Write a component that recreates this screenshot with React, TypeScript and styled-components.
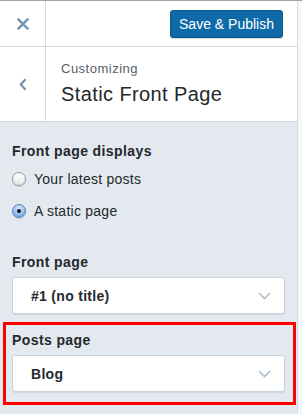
import styled, { createGlobalStyle } from "styled-components";

const GlobalStyle = createGlobalStyle`
    html, body {
        margin: 0;
        padding: 0;
        background: #f7f7f7;
    }
    body {
        font-family: "Liberation Sans", Arial, sans-serif;
        color: #23282d;
    }
`;

const Page = styled.div`
    display: flex;
    width: 302px;
    height: 414px;
    border-top: 1px solid #a3a3a3;
    box-sizing: border-box;
    overflow: hidden;
`;

const Sidebar = styled.div`
    width: 298px;
    background: #e3e9ef;
    border-right: 1px solid #d0dae3;
    box-sizing: border-box;
    display: flex;
    flex-direction: column;
`;

const HeaderRow = styled.div<{ $height: number }>`
    display: flex;
    align-items: stretch;
    height: ${(p) => p.$height}px;
    background: #fff;
    border-bottom: 1px solid #d0dae3;
    box-sizing: border-box;
`;

const IconCell = styled.button`
    width: 46px;
    flex: none;
    border: none;
    border-right: 1px solid #d0dae3;
    background: #fff;
    padding: 0;
    display: flex;
    align-items: center;
    justify-content: center;
    cursor: pointer;
`;

const Actions = styled.div`
    flex: 1;
    display: flex;
    justify-content: flex-end;
    align-items: center;
    padding-right: 14px;
`;

const PublishButton = styled.button`
    width: 113px;
    height: 28px;
    background: #0f6aa8;
    border: 1px solid #0a5a8f;
    border-radius: 3px;
    color: #fff;
    font-family: "Liberation Sans", Arial, sans-serif;
    font-size: 14px;
    padding: 0;
    box-shadow: 0 1px 0 rgba(0, 0, 0, 0.15);
    cursor: pointer;
`;

const TitleBlock = styled.div`
    flex: 1;
    display: flex;
    flex-direction: column;
    justify-content: center;
    padding-left: 15px;
    padding-bottom: 1px;
`;

const Eyebrow = styled.span`
    font-size: 13px;
    letter-spacing: 0.5px;
    color: #555d66;
    line-height: 16px;
`;

const Title = styled.h1`
    margin: 5px 0 0;
    font-size: 20px;
    font-weight: 400;
    letter-spacing: 0.4px;
    line-height: 24px;
    color: #23282d;
`;

const Content = styled.div`
    display: flex;
    flex-direction: column;
    padding: 20px 12px 0;
`;

const SectionLabel = styled.div`
    font-size: 14px;
    font-weight: 700;
    letter-spacing: 0.4px;
    color: #23282d;
    line-height: 18px;
`;

const RadioList = styled.div`
    display: flex;
    flex-direction: column;
    gap: 14px;
    margin-top: 10px;
    margin-bottom: 33px;
`;

const RadioRow = styled.label`
    display: flex;
    align-items: center;
    gap: 8px;
    font-size: 14px;
    letter-spacing: 0.25px;
    color: #23282d;
    line-height: 18px;
`;

const RadioDot = styled.span<{ $checked?: boolean }>`
    width: 14px;
    height: 14px;
    border-radius: 50%;
    box-sizing: border-box;
    display: flex;
    align-items: center;
    justify-content: center;
    border: 1px solid ${(p) => (p.$checked ? "#5a7fb0" : "#9a9a9a")};
    background: ${(p) =>
        p.$checked
            ? "radial-gradient(circle at 50% 30%, #dfefff 0%, #8fbdf0 55%, #5d95df 100%)"
            : "linear-gradient(#ffffff, #e6e6e6)"};
    box-shadow: 0 1px 1px rgba(0, 0, 0, 0.15);

    &::after {
        content: "";
        display: ${(p) => (p.$checked ? "block" : "none")};
        width: 4px;
        height: 4px;
        border-radius: 50%;
        background: #111;
    }
`;

const Field = styled.div<{ $highlight?: boolean }>`
    display: flex;
    flex-direction: column;
    gap: 6px;
    margin: ${(p) => (p.$highlight ? "0 -11px 0 -9px" : "0")};
    padding: ${(p) => (p.$highlight ? "6px 8px 10px 6px" : "0 0 8px")};
    border: ${(p) => (p.$highlight ? "3px solid #ff0000" : "none")};
`;

const SelectBox = styled.div`
    height: 37px;
    background: #fff;
    border: 1px solid #c9d3dd;
    border-radius: 3px;
    box-shadow: 0 1px 1px rgba(0, 0, 0, 0.08);
    box-sizing: border-box;
    display: flex;
    align-items: center;
    justify-content: space-between;
    padding: 0 13px 0 18px;
    font-size: 14px;
    font-weight: 700;
    letter-spacing: 0.3px;
    color: #23282d;
`;

function Chevron() {
    return (
        <svg width="13" height="8" viewBox="0 0 13 8">
            <path d="M1 1l5.5 5.5L12 1" fill="none" stroke="#aebccb" strokeWidth="1.6" />
        </svg>
    );
}

function Select({ value }: { value: string }) {
    return (
        <SelectBox>
            <span>{value}</span>
            <Chevron />
        </SelectBox>
    );
}

export default function App() {
    return (
        <>
            <GlobalStyle />
            <Page>
                <Sidebar>
                    <HeaderRow $height={46}>
                        <IconCell aria-label="Close">
                            <svg width="12" height="12" viewBox="0 0 12 12">
                                <path d="M1.5 1.5l9 9M10.5 1.5l-9 9" stroke="#6f93b0" strokeWidth="2.4" strokeLinecap="square" />
                            </svg>
                        </IconCell>
                        <Actions>
                            <PublishButton>Save &amp; Publish</PublishButton>
                        </Actions>
                    </HeaderRow>
                    <HeaderRow $height={75}>
                        <IconCell aria-label="Back">
                            <svg width="8" height="13" viewBox="0 0 8 13">
                                <path d="M6.5 1.2L1.8 6.5l4.7 5.3" fill="none" stroke="#6f93b0" strokeWidth="2.2" />
                            </svg>
                        </IconCell>
                        <TitleBlock>
                            <Eyebrow>Customizing</Eyebrow>
                            <Title>Static Front Page</Title>
                        </TitleBlock>
                    </HeaderRow>
                    <Content>
                        <SectionLabel>Front page displays</SectionLabel>
                        <RadioList>
                            <RadioRow>
                                <RadioDot />
                                Your latest posts
                            </RadioRow>
                            <RadioRow>
                                <RadioDot $checked />
                                A static page
                            </RadioRow>
                        </RadioList>
                        <Field>
                            <SectionLabel>Front page</SectionLabel>
                            <Select value="#1 (no title)" />
                        </Field>
                        <Field $highlight>
                            <SectionLabel>Posts page</SectionLabel>
                            <Select value="Blog" />
                        </Field>
                    </Content>
                </Sidebar>
            </Page>
        </>
    );
}
